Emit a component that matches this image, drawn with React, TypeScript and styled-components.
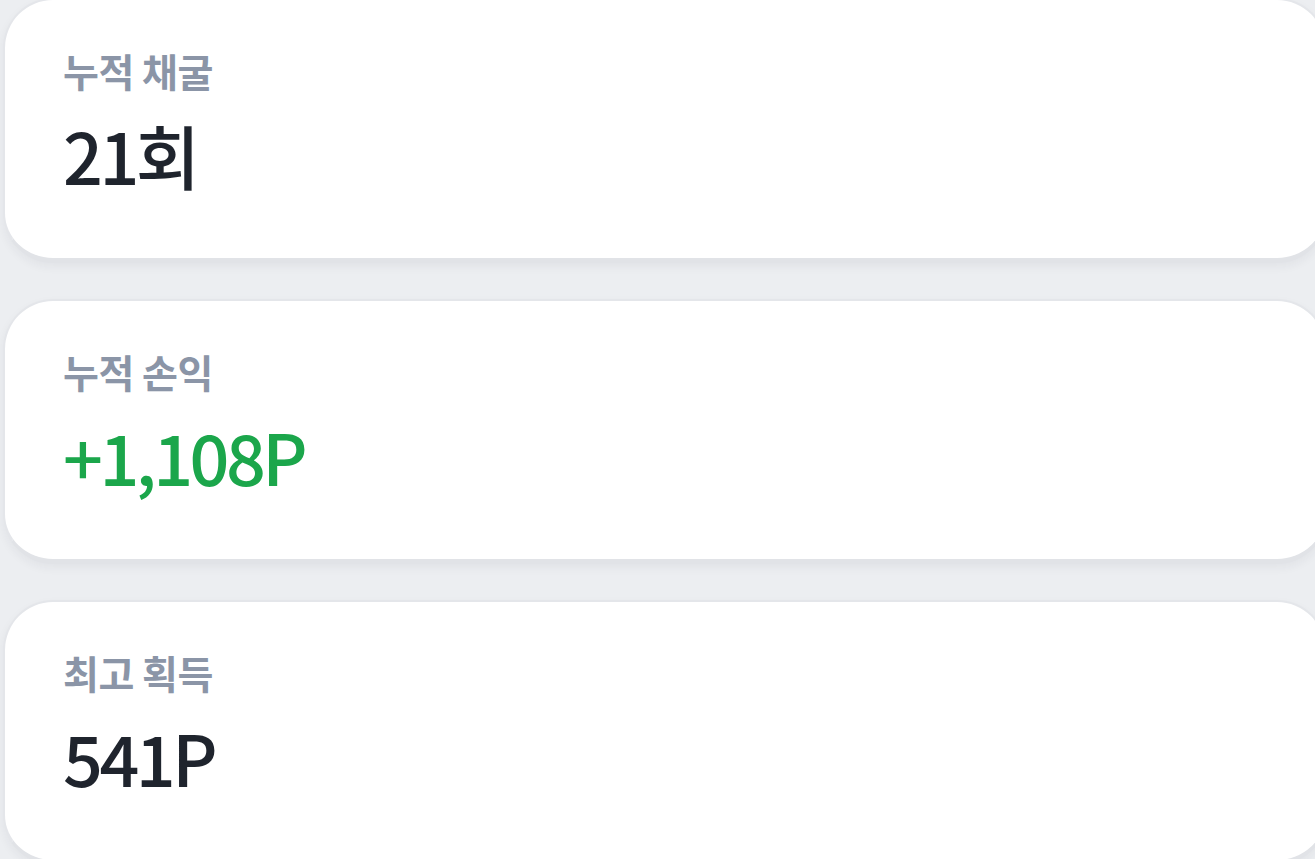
import React from 'react'
import styled, { createGlobalStyle } from 'styled-components'

type Stat = {
  label: string
  value: string
  tone?: 'default' | 'positive'
}

const stats: Stat[] = [
  { label: '누적 채굴', value: '21회' },
  { label: '누적 손익', value: '+1,108P', tone: 'positive' },
  { label: '최고 획득', value: '541P' },
]

const GlobalStyle = createGlobalStyle`
  html, body {
    margin: 0;
    padding: 0;
    background: #eceef1;
    overflow: hidden;
  }
  body {
    font-family: "Noto Sans CJK KR", "Noto Sans", sans-serif;
  }
`

const Page_ = styled.div`
  width: 100%;
  height: 859px;
  overflow: hidden;
`

const List_ = styled.div`
  display: flex;
  flex-direction: column;
  gap: 36px;
  margin-top: -2px;
  padding-left: 3px;
`

const Card_ = styled.div`
  box-sizing: border-box;
  width: 1324px;
  height: 265px;
  flex-shrink: 0;
  background: #ffffff;
  border: 2px solid #e4e6ea;
  border-bottom: 5px solid #e1e3e7;
  border-radius: 50px;
  box-shadow: 0 4px 10px rgba(30, 40, 60, 0.05);
  padding: 47px 0 0 58px;
`

const Label_ = styled.div`
  font-size: 39px;
  line-height: 46px;
  font-weight: 700;
  color: #8b95a7;
  letter-spacing: -0.5px;
`

const Value_ = styled.div<{ $tone: 'default' | 'positive' }>`
  margin-top: 21px;
  font-size: 70px;
  line-height: 82px;
  font-weight: 500;
  letter-spacing: -3.5px;
  color: ${(p) => (p.$tone === 'positive' ? '#1ba64b' : '#1f242d')};
`

export default function App() {
  return (
    <Page_>
      <GlobalStyle />
      <List_>
        {stats.map((s) => (
          <Card_ key={s.label}>
            <Label_>{s.label}</Label_>
            <Value_ $tone={s.tone ?? 'default'}>{s.value}</Value_>
          </Card_>
        ))}
      </List_>
    </Page_>
  )
}
